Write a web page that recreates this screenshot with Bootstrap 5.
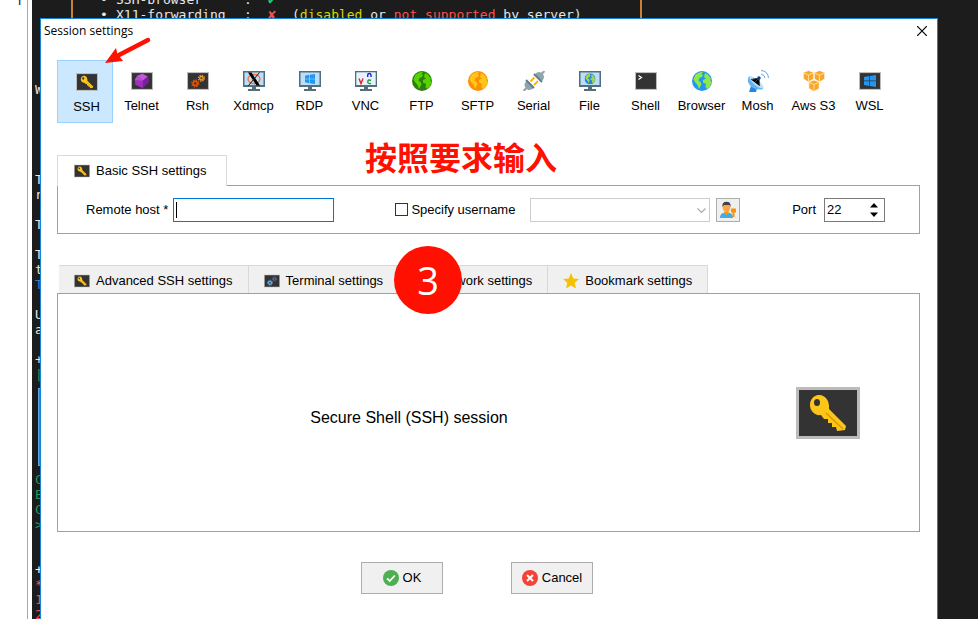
<!DOCTYPE html>
<html lang="en">
<head>
<meta charset="utf-8">
<meta name="viewport" content="width=device-width, initial-scale=1">
<title>Session settings</title>
<link href="https://cdn.jsdelivr.net/npm/bootstrap@5.3.0/dist/css/bootstrap.min.css" rel="stylesheet">
<style>
body{font-family:"Liberation Sans",Arial,sans-serif;font-size:13px;line-height:16px;color:#000;background:#fff}
.desktop{min-height:100vh}
.backdrop{inset:0}
.side-strip{width:28px;border-right:1px solid #a8a8a8;color:#1c2a5c;font:14px/16px "DejaVu Sans Mono",monospace;padding-right:2px}
.side-strip span{margin-top:-8px}
.console{background:#1c1c1c;margin-left:4px;color:#e6e6e6;font:13px/15px "DejaVu Sans Mono",monospace;padding-left:3px}
.console pre{font:inherit;margin:0;overflow:hidden}
.banner{width:571px;margin:-8px 0 0 36px;border:solid #cd7f32;border-width:0 2px;padding-left:27px}
.banner-row{display:grid;grid-template-columns:16px 128px 24px 24px auto;justify-content:start;white-space:pre}
.yl{color:#d6d600}.rd{color:#ff5048}.gn{color:#1fd07a}.dg{color:#1a9a55}.bl{color:#2f7fd0}
.cell-frame{height:78px;width:100px;margin:6px 0 6px 3px;border:1px solid #58a6e8;background:#b5651d}
.win{margin:18px 40px 0;min-height:calc(100vh - 18px);background:#fff;border:1px solid #1883d7;border-bottom:0;padding-bottom:24px}
.title-bar{height:24px;padding:0 10px 0 3px;font:12px/16px "Open Sans",sans-serif}
.x-btn{border:0;background:none;padding:0;line-height:0}
.content{padding:17px 17px 0 16px}
.kind{width:56px;height:63px;flex:0 0 auto;padding:2px 0 0 1px;border:1px solid transparent;background:none;color:#000;font-size:13px;line-height:16px;white-space:nowrap}
.kind.active{background:#cce8ff;border-color:#99d1ff;padding:4px 0 0 3px}
.kind svg{width:22px;height:20px;margin-bottom:7px}
.tab-item{border:1px solid #d9d9d9;border-left-width:0;border-bottom:0;background:#f0f0f0;height:28px;padding:2px 15px 0;color:#000;gap:6px;font-size:13px;line-height:16px}
.tab-item svg{width:16px;height:14px}
.tab-item .star{height:16px}
.tab-item.current{background:#fff;border-left-width:1px;height:31px;margin-bottom:-1px;padding:0 19px 0 16px;position:relative}
.basic{margin-top:32px}
.extra{margin-top:31px}
.extra .tabs{padding-left:2px}
.pane{border:1px solid #a0a0a0}
.fields{height:49px;padding:0 34px 0 28px}
.box{height:24px;border-radius:0;border:1px solid #ccc;padding:0 4px;font-size:13px;line-height:16px;color:#000;box-shadow:none}
.host{width:161px;margin:0 61px 0 5px;border-color:#0078d7;background:linear-gradient(#000,#000) 2px 3px/1px 16px no-repeat #fff}
.tick{appearance:none;width:13px;height:13px;border:1px solid #333;margin:0 3px 0 0;background:#fff}
.user-pick{width:180px;margin:0 6px 0 15px;--bs-form-select-bg-img:none}
.user-pick:disabled{background:#fff;opacity:1}
.pick-wrap svg{right:10px;top:10px}
.tool-btn{width:24px;height:24px;border:1px solid #adadad;background:#efefef;padding:0;line-height:0}
.port{width:61px;border-color:#7a7a7a;background:#fff;padding:0 6px 0 2px}
.port input{border:0;width:34px;padding:0;font-size:13px;outline:0;appearance:textfield}
.port input::-webkit-inner-spin-button{display:none}
.port button{border:0;background:none;padding:0;line-height:0}
.info{height:239px;padding-right:59px;gap:36px;font-size:16px;line-height:20px}
.info svg{width:64px;height:52px}
.info-text{padding-top:10px}
.actions{gap:68px;margin-top:30px;padding-right:23px}
.act{width:82px;height:32px;border:1px solid #adadad;background:#f0f0f0;color:#000;gap:4px;font-size:13px;padding:0}
.note{color:#ff1000;pointer-events:none}
.note-arrow{left:60px;top:16px}
.note-text{left:324px;top:113px;font:700 32px/48px "Noto Sans CJK SC",sans-serif;white-space:nowrap}
.note-step{left:353px;top:227px;width:68px;height:68px;border-radius:50%;background:#ff1000;color:#fff;font:38px/68px "Open Sans",sans-serif;text-align:center}
</style>
<script src="https://cdn.jsdelivr.net/npm/bootstrap@5.3.0/dist/js/bootstrap.bundle.min.js"></script>
</head>
<body>
<svg class="d-none" aria-hidden="true">
  <symbol id="frame" viewBox="0 0 64 52"><path fill="#bbb" d="M0 0h64v52H0z"/><path fill="#333" d="M3 3h58v46H3z"/></symbol>
  <symbol id="key" viewBox="0 0 64 52"><use href="#frame" width="64" height="52"/><path fill="#ffc61a" d="M22 8c7-1 12 6 11 14l17 17-1 4-8 1-1-4-4 0 0-4-4 0 0-4-4 0-3-4c-6 1-11-4-11-10 0-5 3-9 8-10z"/><path stroke="#d99c00" stroke-width="1.6" d="M30 26l17 16"/><ellipse cx="21" cy="15.500" rx="3" ry="3.500" fill="#333"/></symbol>
  <symbol id="gem" viewBox="0 0 64 52"><use href="#frame" width="64" height="52"/><path fill="#9c27b0" d="M33 5l16 8 3 15-18 18-21-9-2-14 7-12z"/><path fill="#c45bd6" d="M33 5l16 8-15 12-16-14z"/><path fill="#7b1fa2" d="M34 25l15-12 3 15-18 18z"/><path fill="#a02fc0" d="M11 23l7-12 16 14v21l-21-9z"/><path fill="#b84fd0" d="M18 11l16 14-23-2z"/></symbol>
  <symbol id="gears" viewBox="0 0 64 52"><use href="#frame" width="64" height="52"/><g fill="none"><circle cx="24" cy="33" r="6" stroke="var(--g1)" stroke-width="5"/><circle cx="24" cy="33" r="10" stroke="var(--g1)" stroke-width="4" stroke-dasharray="4 3.85"/><circle cx="42" cy="18" r="5" stroke="var(--g2)" stroke-width="4"/><circle cx="42" cy="18" r="8.500" stroke="var(--g2)" stroke-width="4" stroke-dasharray="3.500 3.180"/></g></symbol>
  <symbol id="monitor" viewBox="0 0 22 20"><path fill="#546e7a" d="M0 0h22v16h-9v2h4v2H5v-2h4v-2H0z"/><path fill="#bbdefb" d="M1.500 1.500h19v12.500h-19z"/></symbol>
  <symbol id="flag" viewBox="0 0 12 12"><path fill="#2196f3" d="M0 2l5-1v4.600H0zM5.700.9L12 0v5.600H5.700zM0 6.300h5V11l-5-1zM5.700 6.300H12V12l-6.300-.9z"/></symbol>
  <symbol id="globe" viewBox="0 0 20 20"><circle cx="10" cy="10" r="10" fill="var(--sea)"/><path fill="var(--land)" d="M3 4.500C5 2 8 .6 11 1L9.500 3l1.500 1-1 2-2.500 1-1 2.500 2 1.500 1 2-1.500 3L7 18 5.500 14 3 11 1.500 8.500zM13 2l3 1.500L19 8l-1 .5L19.500 11 18 15.500 15 18l-1.500-2 .5-3-3-1.500V9l3-1.500L12 6z"/></symbol>
</svg>
<div class="desktop position-relative overflow-hidden">
  <div class="backdrop position-absolute d-flex overflow-hidden">
    <div class="side-strip d-flex justify-content-end align-items-start flex-shrink-0"><span>r</span></div>
    <div class="console flex-grow-1 overflow-hidden">
      <div class="banner">
        <div class="banner-row"><span>•</span><span>SSH-browser</span><span>:</span><span class="gn">✔</span><span></span></div>
        <div class="banner-row"><span>•</span><span>X11-forwarding</span><span>:</span><span class="rd">✘</span><span>(<span class="yl">disabled</span> or <span class="rd">not supported</span> by server)</span></div>
      </div>
<pre>



 
W





T
r

T

T
t
<span class="bl">T</span>

U
a

+
<span class="dg">|</span></pre>
      <div class="cell-frame"></div>
<pre class="dg">C
E
C
&gt;


<span class="text-white">+</span>
<span class="rd">*
1
2</span></pre>
    </div>
  </div>

  <main class="win position-relative">
    <div class="title-bar d-flex justify-content-between align-items-center">
      <span>Session settings</span>
      <button class="x-btn" type="button" aria-label="Close"><svg width="10" height="10" viewBox="0 0 10 10"><path d="M0 0l10 10M10 0L0 10" stroke="#000" stroke-width="1.200"/></svg></button>
    </div>
    <form class="content">
      <div class="d-flex">
        <button type="button" class="kind active"><svg viewBox="0 0 22 20"><use href="#key" y="1" width="22" height="18"/></svg><br>SSH</button>
        <button type="button" class="kind"><svg viewBox="0 0 22 20"><use href="#gem" y="1" width="22" height="18"/></svg><br>Telnet</button>
        <button type="button" class="kind"><svg viewBox="0 0 22 20" style="--g1:#e65100;--g2:#fb9b1e"><use href="#gears" y="1" width="22" height="18"/></svg><br>Rsh</button>
        <button type="button" class="kind"><svg viewBox="0 0 22 20"><use href="#monitor" width="22" height="20"/><ellipse cx="11" cy="8" rx="6" ry="4.500" fill="none" stroke="#ff6d2d" stroke-width="1.300"/><path d="M5 1.500h3.500L17 14.500h-3.500z"/><path stroke="#111" d="M16.500 1.500l-11 13"/></svg><br>Xdmcp</button>
        <button type="button" class="kind"><svg viewBox="0 0 22 20"><use href="#monitor" width="22" height="20"/><use href="#flag" x="6" y="3" width="10" height="10"/></svg><br>RDP</button>
        <button type="button" class="kind"><svg viewBox="0 0 22 20"><use href="#monitor" width="22" height="20"/><path fill="#e6f2fc" d="M1.500 1.500h19v12.500h-19z"/><g fill="none" stroke-width="1.400"><path stroke="#e22" d="M4 7.500l2 5 2-5"/><path stroke="#22d" d="M12.700 6V4q0-1.500 1.600-1.500T16 4v2"/><path stroke="#1a9a3a" d="M16 9.500q-3-1.500-3.200 1T16 12.500"/></g></svg><br>VNC</button>
        <button type="button" class="kind"><svg viewBox="0 0 22 20" style="--sea:#2e7d0e;--land:#55d400"><use href="#globe" x="1" width="20" height="20"/></svg><br>FTP</button>
        <button type="button" class="kind"><svg viewBox="0 0 22 20" style="--sea:#ff8f00;--land:#ffc61a"><use href="#globe" x="1" width="20" height="20"/></svg><br>SFTP</button>
        <button type="button" class="kind"><svg viewBox="0 0 22 20"><path fill="none" stroke="#90a4ae" stroke-width="2.200" d="M.5 20l4-4M17.500 4l4-4"/><path stroke="#ffb300" stroke-width="1.800" d="M7.500 10.500l4-4M11 14l4-4"/><path fill="#90a4ae" d="M12 3q3-3 6-1.500L20.500 4q1.500 3-1.500 6zM3.500 10l7 7q-3 3-6 1.500L2 16q-1.500-3 1.500-6z"/><path stroke="#607d8b" stroke-width="2" d="M11 3l8 8M3 9l8 8"/></svg><br>Serial</button>
        <button type="button" class="kind"><svg viewBox="0 0 22 20" style="--sea:#1e88e5;--land:#a6d63c"><use href="#monitor" width="22" height="20"/><use href="#globe" x="5.500" y="2.300" width="11" height="11"/></svg><br>File</button>
        <button type="button" class="kind"><svg viewBox="0 0 22 20"><use href="#frame" y="1" width="22" height="18"/><path fill="none" stroke="#fff" stroke-width="1.200" d="M3.500 4.500l3 2-3 2"/></svg><br>Shell</button>
        <button type="button" class="kind"><svg viewBox="0 0 22 20" style="--sea:#2196f3;--land:#8ee84a"><use href="#globe" x="1" width="20" height="20"/></svg><br>Browser</button>
        <button type="button" class="kind"><svg viewBox="0 0 22 20" overflow="visible"><path fill="#1e88e5" d="M4 15l6 2-1 4H2z"/><path fill="#64b5f6" d="M2 5q-3 5 1 9.500t12 4l1.500-1.500z"/><path fill="#bbdefb" d="M2 5q4.500 0 9.500 4.500t5 7.500q-4 1-9-3.500T2 5z"/><path stroke="#37474f" d="M4 8.500l8-1.500.5 8M12 7l-4 4"/><circle cx="12" cy="7" r="1.700" fill="#0d3c8c"/><path fill="none" stroke="#64a8e8" d="M14 3q3.500.5 4 4M14-.5q7 .5 7.500 7.500"/></svg><br>Mosh</button>
        <button type="button" class="kind"><svg viewBox="0 0 22 20" overflow="visible"><g stroke="#fff" stroke-width=".7" fill="#f9a72b"><path id="cube" d="M5.500-.5l5.200 2v6.500l-5.200 3-5.200-3V1.500z"/><use href="#cube" x="11"/><use href="#cube" x="5.500" y="9.500"/></g><path fill="none" stroke="#ffe0a8" stroke-width=".9" d="M.5 2l5 2 5-2M5.500 4v6.500M11.500 2l5 2 5-2M16.500 4v6.500M6 11.500l5 2 5-2M11 13.500V20"/></svg><br>Aws S3</button>
        <button type="button" class="kind"><svg viewBox="0 0 22 20"><use href="#frame" y="1" width="22" height="18"/><use href="#flag" x="5" y="4" width="12" height="12"/></svg><br>WSL</button>
      </div>

      <section class="basic">
        <div class="tabs d-flex"><button type="button" class="tab-item current d-flex align-items-center"><svg><use href="#key"/></svg>Basic SSH settings</button></div>
        <div class="pane fields d-flex align-items-center">
          <label for="host">Remote host *</label>
          <input id="host" type="text" class="box host">
          <input id="useName" type="checkbox" class="tick"><label for="useName">Specify username</label>
          <div class="pick-wrap position-relative">
            <select class="form-select box user-pick" aria-label="Username" disabled><option></option></select>
            <svg class="position-absolute" width="9" height="6" viewBox="0 0 9 6"><path d="M.5.5l4 4 4-4" fill="none" stroke="#aaa" stroke-width="1.200"/></svg>
          </div>
          <button type="button" class="tool-btn" aria-label="Manage users"><svg width="18" height="18" viewBox="0 0 18 18"><path fill="#3daee9" d="M1 17c0-4 2-5 5-5.500h3c3 .5 5 1.500 5 5.500z"/><path fill="#ff9800" d="M5.500 10h4v2.500l-2 1.500-2-1.500z"/><ellipse cx="7.500" cy="6.500" rx="3.800" ry="4.700" fill="#ffa63d"/><path fill="#424242" d="M3.400 6C3 2.500 4.500.8 7.500.8S12 2.500 11.600 6L10.500 4H5z"/><path fill="#ff9100" d="M12 7.500h5v4h-1.500V16h-2v-4.500H12z"/></svg></button>
          <label for="port" class="ms-auto me-2">Port</label>
          <div class="box port d-flex align-items-center justify-content-between">
            <input id="port" type="number" value="22">
            <span class="d-flex flex-column gap-1">
              <button type="button" aria-label="Increase"><svg width="8" height="5" viewBox="0 0 8 5"><path d="M4 0l4 4.500H0z"/></svg></button>
              <button type="button" aria-label="Decrease"><svg width="8" height="5" viewBox="0 0 8 5"><path d="M0 .5h8L4 5z"/></svg></button>
            </span>
          </div>
        </div>
      </section>

      <section class="extra">
        <div class="tabs d-flex">
          <button type="button" class="tab-item d-flex align-items-center"><svg><use href="#key"/></svg>Advanced SSH settings</button>
          <button type="button" class="tab-item d-flex align-items-center"><svg style="--g1:#64b5f6;--g2:#5c6bc0"><use href="#gears"/></svg>Terminal settings</button>
          <button type="button" class="tab-item d-flex align-items-center"><svg viewBox="0 0 16 14"><circle cx="8" cy="7" r="6" fill="#2196f3"/></svg>Network settings</button>
          <button type="button" class="tab-item d-flex align-items-center"><svg class="star" viewBox="0 0 16 16"><path fill="#f6c100" d="M8 0l2.300 5.500 5.700.5-4.300 3.800L13 15.500 8 12.400 3 15.500l1.300-5.700L0 6l5.700-.5z"/></svg>Bookmark settings</button>
        </div>
        <div class="pane info d-flex align-items-center">
          <div class="info-text flex-grow-1 text-center">Secure Shell (SSH) session</div>
          <svg><use href="#key"/></svg>
        </div>
      </section>

      <div class="actions d-flex justify-content-center">
        <button type="button" class="act d-flex align-items-center justify-content-center"><svg width="16" height="16" viewBox="0 0 16 16"><circle cx="8" cy="8" r="8" fill="#4caf50"/><path d="M4 8.300l2.800 2.700 5-5.500" fill="none" stroke="#fff" stroke-width="1.800"/></svg>OK</button>
        <button type="button" class="act d-flex align-items-center justify-content-center"><svg width="16" height="16" viewBox="0 0 16 16"><circle cx="8" cy="8" r="8" fill="#f44336"/><path d="M5 5l6 6M11 5l-6 6" stroke="#fff" stroke-width="2"/></svg>Cancel</button>
      </div>
    </form>

    <svg class="note note-arrow position-absolute" width="52" height="32" viewBox="0 0 52 32"><path d="M47 5L18 20" stroke="#ff1000" stroke-width="4.500" stroke-linecap="round"/><path fill="#ff1000" d="M4 28l11-15 1.500 6 5.500 7z"/></svg>
    <div class="note note-text position-absolute" lang="zh-CN">按照要求输入</div>
    <div class="note note-step position-absolute">3</div>
  </main>
</div>
</body>
</html>
